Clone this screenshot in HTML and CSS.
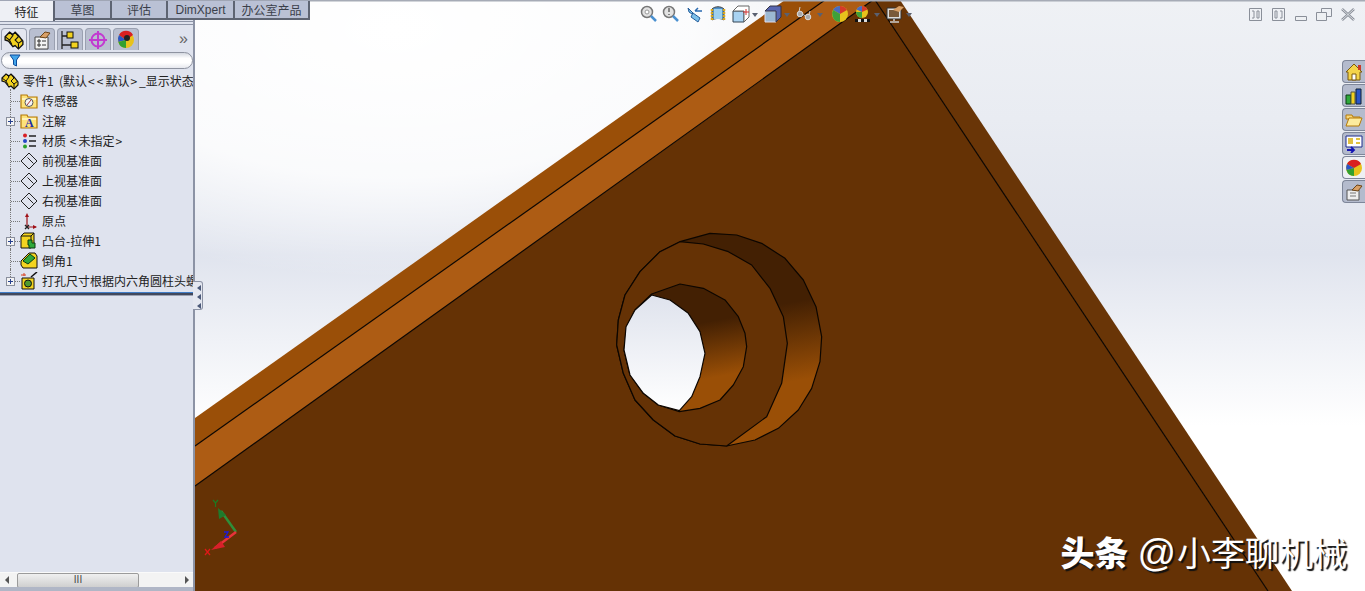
FILE: index.html
```html
<!DOCTYPE html>
<html lang="zh">
<head>
<meta charset="utf-8">
<title>SolidWorks</title>
<link rel="stylesheet" href="styles.css">
</head>
<body>
<svg class="defs" width="0" height="0" aria-hidden="true">
  <defs>
    <symbol id="i-part" viewBox="0 0 18 18"><path d="M1 6 5 2l3 2 2-2 3 3 4 5v3l-4 4-3-3-2 1-4-5-3-1z" fill="#f2d21f" stroke="#111" stroke-width="1.200"/><path d="M1 6l4 3 2 4M5 2l3 3-3 4M10 2l3 4-3 3 3 3 4-3M13 12v5" fill="none" stroke="#111"/></symbol>
    <symbol id="i-folder" viewBox="0 0 18 18"><path d="M1 3h6l1 2h9v11H1z" fill="#fde27a" stroke="#b57a08" stroke-width="1.200"/><path d="M2 6h14v2H2z" fill="#fff3b8"/></symbol>
    <symbol id="i-plane" viewBox="0 0 18 18"><path d="M9 1 17 9 9 17 1 9z M7.500 5.500l6 6" fill="none" stroke="#222"/></symbol>
  </defs>
</svg>
<div class="app">
  <aside class="panel">
    <nav class="top-tabs">
      <span class="top-tab active w-feature">特征</span>
      <span class="top-tab w-sketch">草图</span>
      <span class="top-tab w-eval">评估</span>
      <span class="top-tab w-dim">DimXpert</span>
      <span class="top-tab w-office">办公室产品</span>
    </nav>
    <div class="head-rule"></div>
    <div class="icon-tabs">
      <span class="icon-tab active"><svg width="20" height="20"><use href="#i-part"/></svg></span>
      <span class="icon-tab"><svg width="20" height="20" viewBox="0 0 20 20"><path d="M3 7h13v12H3z" fill="#f3f3f3" stroke="#444"/><path d="M6 10h2v2H6zM6 14h2v2H6zM10 11h4M10 15h4" fill="none" stroke="#333"/><path d="M8 7l5-5 5 1-4 5z" fill="#d9a066" stroke="#6d4518"/></svg></span>
      <span class="icon-tab"><svg width="20" height="20" viewBox="0 0 20 20"><path d="M2 1v18M2 6h6M2 15h9" fill="none" stroke="#222" stroke-width="1.300"/><rect x="7" y="2" width="6" height="6" fill="#f2d21f" stroke="#111"/><rect x="11" y="12" width="7" height="6" fill="#f2d21f" stroke="#111"/></svg></span>
      <span class="icon-tab"><svg width="20" height="20" viewBox="0 0 20 20"><circle cx="10" cy="10" r="6.500" fill="none" stroke="#c23ad0" stroke-width="2"/><path d="M10 1v18M1 10h18" stroke="#c23ad0" stroke-width="2"/></svg></span>
      <span class="icon-tab"><svg width="20" height="20" viewBox="0 0 20 20"><circle cx="10" cy="10" r="8" fill="#e8c21c"/><path d="M10 10 3 5a8 8 0 0 1 14 0z" fill="#d92020"/><path d="M10 10 2.400 12A8 8 0 0 1 3 5z" fill="#2a55c8"/><path d="M10 10 2.400 12A8 8 0 0 0 10 18z" fill="#31a02f"/><circle cx="11" cy="8" r="3" fill="#222"/></svg></span>
      <span class="more">»</span>
    </div>
    <div class="filter">
      <svg width="12" height="13" viewBox="0 0 12 13"><path d="M1 1h10L7.500 6v6l-3-1.500V6z" fill="#42a5ea" stroke="#0d4d9c"/></svg>
    </div>
    <ul class="tree">
      <li class="row root"><svg class="node" width="18" height="18"><use href="#i-part"/></svg><span>零件1&nbsp; (默认<i class="wide">&lt;&lt;</i>默认<i class="wide">&gt;</i>_显示状态 1&gt;)</span></li>
      <li class="row"><span class="branch"></span><svg class="node" width="18" height="18" viewBox="0 0 18 18"><use href="#i-folder"/><circle cx="9" cy="10.500" r="4" fill="#f5f5f5" stroke="#555"/><path d="M7 13l4-5" stroke="#a33"/></svg><span>传感器</span></li>
      <li class="row"><span class="branch"><i class="plus"></i></span><svg class="node" width="18" height="18" viewBox="0 0 18 18"><use href="#i-folder"/><text class="glyph-a" x="5" y="15">A</text></svg><span>注解</span></li>
      <li class="row"><span class="branch"></span><svg class="node" width="18" height="18" viewBox="0 0 18 18"><circle cx="5" cy="3.500" r="2" fill="#d81f26"/><circle cx="5" cy="9" r="2" fill="#2546c7"/><circle cx="5" cy="14.500" r="2" fill="#2aa02b"/><path d="M9 4h7M9 9h7M9 14h7" stroke="#222" stroke-width="1.500"/></svg><span>材质 <i class="wide">&lt;</i>未指定<i class="wide">&gt;</i></span></li>
      <li class="row"><span class="branch"></span><svg class="node" width="18" height="18"><use href="#i-plane"/></svg><span>前视基准面</span></li>
      <li class="row"><span class="branch"></span><svg class="node" width="18" height="18"><use href="#i-plane"/></svg><span>上视基准面</span></li>
      <li class="row"><span class="branch"></span><svg class="node" width="18" height="18"><use href="#i-plane"/></svg><span>右视基准面</span></li>
      <li class="row"><span class="branch"></span><svg class="node" width="18" height="18" viewBox="0 0 18 18"><path d="M7 15V3M7 15h9" stroke="#a01218" stroke-width="1.200"/><path d="M7 1 5 5h4zM17 15l-4-2v4z" fill="#a01218"/><path d="M5 13l4 4M9 13l-4 4" stroke="#222" stroke-width="1.300"/></svg><span>原点</span></li>
      <li class="row"><span class="branch"><i class="plus"></i></span><svg class="node" width="18" height="18" viewBox="0 0 18 18"><path d="M1 4l3-3h10v12l-3 3H1z" fill="#f4d420" stroke="#111"/><path d="M1 4h10v12M11 4l3-3" fill="none" stroke="#111"/><path d="M8 8h4v3h3v5H9v-3H8z" fill="#2fa83a" stroke="#0a3d12"/></svg><span>凸台-拉伸1</span></li>
      <li class="row"><span class="branch"></span><svg class="node" width="18" height="18" viewBox="0 0 18 18"><path d="M1 9 9 1h6l2 3v12H3L1 13z" fill="#f4d420" stroke="#111"/><path d="M3 9 10 2l5 4-7 6z" fill="#2fa83a" stroke="#0a3d12"/></svg><span>倒角1</span></li>
      <li class="row"><span class="branch"><i class="plus"></i></span><svg class="node" width="18" height="18" viewBox="0 0 18 18"><path d="M2 6h12v11H2z" fill="#f4d420" stroke="#111"/><circle cx="8" cy="11.500" r="3.500" fill="#4f9a2f" stroke="#111"/><path d="M11 5l6-5" stroke="#111" stroke-width="1.500"/><path d="M4 1v3M1 3h5" stroke="#d8401f"/></svg><span>打孔尺寸根据内六角圆柱头螺钉的类型1</span></li>
    </ul>
    <div class="pane-rule"></div>
    <div class="pane-fill"></div>
    <div class="hscroll">
      <span class="arrow-left"></span>
      <span class="thumb">III</span>
      <span class="arrow-right"></span>
    </div>
    <div class="panel-foot"></div>
    <div class="splitter"><i></i><i></i><i></i></div>
  </aside>

  <main class="viewport">
    <svg class="scene" viewBox="195 0 1170 591" preserveAspectRatio="none">
      <defs>
        <linearGradient id="bg" x1="0" y1="0" x2="0" y2="1">
          <stop offset="0" stop-color="#eff1f5"/>
          <stop offset=".2" stop-color="#e9ecf2"/>
          <stop offset=".43" stop-color="#e0e4ee"/>
          <stop offset=".72" stop-color="#ffffff"/>
          <stop offset="1" stop-color="#ffffff"/>
        </linearGradient>
        <radialGradient id="glow" cx=".17" cy=".05" r=".42">
          <stop offset="0" stop-color="#fff"/>
          <stop offset=".6" stop-color="#fff" stop-opacity=".8"/>
          <stop offset="1" stop-color="#fff" stop-opacity="0"/>
        </radialGradient>
        <linearGradient id="wall1" gradientUnits="userSpaceOnUse" x1="550" y1="200" x2="610" y2="530">
          <stop offset="0" stop-color="#432003"/>
          <stop offset=".15" stop-color="#432003"/>
          <stop offset=".85" stop-color="#9a4f06"/>
          <stop offset="1" stop-color="#9a4f06"/>
        </linearGradient>
        <linearGradient id="wall2" gradientUnits="userSpaceOnUse" x1="330" y1="270" x2="370" y2="490">
          <stop offset="0" stop-color="#432003"/>
          <stop offset=".15" stop-color="#432003"/>
          <stop offset=".9" stop-color="#9a4f06"/>
          <stop offset="1" stop-color="#9a4f06"/>
        </linearGradient>
        <linearGradient id="through" gradientUnits="userSpaceOnUse" x1="0" y1="225" x2="0" y2="572">
          <stop offset="0" stop-color="#dfe3ed"/>
          <stop offset="1" stop-color="#ffffff"/>
        </linearGradient>
      </defs>
      <rect x="195" y="0" width="1170" height="591" fill="url(#bg)"/>
      <rect x="195" y="0" width="1170" height="591" fill="url(#glow)"/>
      <polygon points="195,418 785,0 825,0 195,446" fill="#9a4f08"/>
      <polygon points="195,446 825,0 873,0 195,486" fill="#ad5c14"/>
      <polygon points="195,486 873,0 875,0 1268,591 195,591" fill="#653205"/>
      <polygon points="875,0 900,0 1292,591 1268,591" fill="#693507"/>
      <path d="M195 446 825 0M195 486 873 0M875 0 1268 591" fill="none" stroke="#0d0600" stroke-width="1.200"/>
      <g transform="translate(600 220) scale(.33333)">
        <g stroke="#0d0600" stroke-width="1.200" stroke-linejoin="round">
          <polygon vector-effect="non-scaling-stroke" fill="url(#wall1)" points="240,65 330,40 410,45 485,70 555,115 610,180 648,260 665,350 660,425 635,505 595,570 535,625 465,660 380,678 300,672 225,648 160,600 105,540 70,460 50,375 55,300 75,225 120,155 180,95"/>
          <polygon vector-effect="non-scaling-stroke" fill="#653205" points="240,65 310,72 385,95 455,135 510,205 550,290 562,370 545,490 500,590 380,678 300,672 225,648 160,600 105,540 70,460 50,375 55,300 75,225 120,155 180,95"/>
          <polygon vector-effect="non-scaling-stroke" fill="url(#wall2)" points="155,222 240,192 310,205 375,240 415,290 435,340 440,380 430,440 400,495 360,540 300,565 238,575 175,555 130,520 90,465 72,390 80,320 105,270"/>
          <polygon vector-effect="non-scaling-stroke" fill="url(#through)" points="155,225 210,240 265,280 300,335 315,400 300,470 275,530 238,572 175,555 130,520 90,465 72,390 78,320 105,270"/>
        </g>
      </g>
      <g class="triad">
        <path d="M236 532 221 511" stroke="#2f8f3a" stroke-width="2.500"/>
        <path d="M218 508 226 515 219 519z" fill="#1f7a2c"/>
        <path d="M236 532 215 548" stroke="#e8323a" stroke-width="2.500"/>
        <path d="M211 550 221 541 225 547z" fill="#d8202a"/>
        <path d="M224 532h4l-3 5h4" fill="none" stroke="#1a1ae0" stroke-width="1.300"/>
        <path d="M213 500l2.500 3 2.500-3M215.500 503v4" fill="none" stroke="#1c7a22" stroke-width="1.200"/>
        <path d="M205 549l5 6M210 549l-5 6" fill="none" stroke="#e01818" stroke-width="1.200"/>
      </g>
      <rect x="195" y="0" width="1170" height="1.500" fill="#a6abb6"/>
    </svg>

    <div class="view-tools">
      <svg class="tool t-a" width="18" height="18" viewBox="0 0 18 18"><circle cx="7" cy="7" r="5.500" fill="#e2e2e2" stroke="#777" stroke-width="1.500"/><circle cx="7" cy="7" r="2" fill="#fff" stroke="#999"/><path d="M11 11l5 5" stroke="#4a90d0" stroke-width="2.500"/></svg>
      <svg class="tool t-b" width="18" height="18" viewBox="0 0 18 18"><circle cx="7" cy="7" r="5.500" fill="#e2e2e2" stroke="#777" stroke-width="1.500"/><path d="M7 3v4M7 9v1" stroke="#666" stroke-width="1.500"/><path d="M11 11l5 5" stroke="#4a90d0" stroke-width="2.500"/></svg>
      <svg class="tool t-c" width="18" height="18" viewBox="0 0 18 18"><path d="M2 3l5 5-1 1-3-2zM7 8l7 5-2 4-7-5z" fill="#7cc0ea" stroke="#245c9a"/><path d="M9 6h7M9 6l3-3" fill="none" stroke="#2a6ab0" stroke-width="1.500"/></svg>
      <svg class="tool t-d" width="18" height="18" viewBox="0 0 18 18"><path d="M3 4c3-3 9-3 12 0v11c-3-2-9-2-12 0z" fill="#4d8fc7" stroke="#444"/><path d="M5 4h8v10H5z" fill="#9ed0ef"/><path d="M3 4v11M15 4v11" stroke="#d9a71c" stroke-width="2.500" stroke-dasharray="2 1"/></svg>
      <svg class="tool t-e" width="18" height="18" viewBox="0 0 18 18"><path d="M1 6h11v11H1z" fill="#a9d3f2" stroke="#345"/><path d="M1 6l5-5h11v11l-5 5V6z" fill="#fff" stroke="#666"/><path d="M14 4v6M11 7h6" stroke="#d03030"/></svg>
      <i class="caret c-e"></i>
      <svg class="tool t-f" width="18" height="18" viewBox="0 0 18 18"><path d="M1 6h11v11H1z" fill="#9cb8d2" stroke="#dde"/><path d="M1 6l5-5h11v11l-5 5V6z" fill="#5866b0" stroke="#334"/></svg>
      <i class="caret c-f"></i>
      <svg class="tool t-g" width="18" height="18" viewBox="0 0 18 18"><circle cx="5" cy="9" r="2.800" fill="#a8a8a8" stroke="#ddd"/><circle cx="13" cy="12" r="2.800" fill="#a8a8a8" stroke="#ddd"/><path d="M7 9l4 2M4 7l1-5M14 10l1-4" fill="none" stroke="#ccc"/></svg>
      <i class="caret c-g"></i>
      <svg class="tool t-h" width="18" height="18" viewBox="0 0 18 18"><circle cx="9" cy="9" r="8" fill="#e8c21c"/><path d="M9 9 2 5a8 8 0 0 1 7-4z" fill="#4a6cc0"/><path d="M9 9V1a8 8 0 0 1 7 4z" fill="#d63a2a"/><path d="M9 9 1.500 11A8 8 0 0 1 2 5zM9 9v8a8 8 0 0 1-7.500-6z" fill="#3ea03a"/></svg>
      <svg class="tool t-i" width="18" height="18" viewBox="0 0 18 18"><circle cx="9" cy="7" r="6" fill="#e8c21c"/><path d="M9 7 3.500 4.500A6 6 0 0 1 9 1z" fill="#4a6cc0"/><path d="M9 7V1a6 6 0 0 1 5.500 3.500z" fill="#d63a2a"/><path d="M9 7v6a6 6 0 0 1-6-6z" fill="#3ea03a"/><path d="M2 14h3v3H2zM8 14h3v3H8zM14 14h3v3h-3z" fill="#111"/><path d="M5 14h3v3H5zM11 14h3v3h-3z" fill="#ddd"/></svg>
      <i class="caret c-i"></i>
      <svg class="tool t-j" width="18" height="18" viewBox="0 0 18 18"><path d="M1 3h14v11H1z" fill="#ddd" stroke="#333"/><path d="M3 5h10v7H3z" fill="#7a5a3a"/><path d="M8 14v2M4 17h9" stroke="#ccc" stroke-width="1.500"/><path d="M7 5l6-4 5 1-5 5z" fill="#d9a066"/></svg>
      <i class="caret c-j"></i>
    </div>

    <div class="win-tools">
      <svg class="win w-a" width="13" height="13" viewBox="0 0 13 13"><path d="M.500.500h12v12H.500z" fill="none" stroke="#8a8f99"/><path d="M3 3h2v7H3M8 3h2v7H8z" fill="none" stroke="#8a8f99"/></svg>
      <svg class="win w-b" width="13" height="13" viewBox="0 0 13 13"><path d="M.500.500h12v12H.500z" fill="none" stroke="#8a8f99"/><path d="M3 3h2v7H3zM8 3h2v7H8" fill="none" stroke="#8a8f99"/></svg>
      <svg class="win w-c" width="12" height="13" viewBox="0 0 12 13"><path d="M.500 8.500h11v4H.500z" fill="#eef0f3" stroke="#8a8f99"/></svg>
      <svg class="win w-d" width="16" height="13" viewBox="0 0 16 13"><path d="M5.500.500h10v8h-10z" fill="none" stroke="#8a8f99"/><path d="M.500 4.500h10v8H.500z" fill="#eef0f3" stroke="#8a8f99"/></svg>
      <svg class="win w-e" width="14" height="13" viewBox="0 0 14 13"><path d="M1 1l12 11M13 1 1 12" stroke="#8a8f99" stroke-width="2.500"/><path d="M1 1l12 11M13 1 1 12" stroke="#eef0f3" stroke-width=".8"/></svg>
    </div>

    <div class="task-tabs">
      <span class="task"><svg width="18" height="18" viewBox="0 0 18 18"><path d="M1 9 9 1l8 8h-2v8H3V9z" fill="#f4d44a" stroke="#7a5a10"/><path d="M7 11h4v6H7z" fill="#fff" stroke="#7a5a10"/><path d="M13 2h3v5h-3z" fill="#c83a2a"/></svg></span>
      <span class="task"><svg width="18" height="18" viewBox="0 0 18 18"><path d="M1 8h5v9H1z" fill="#2fa83a" stroke="#0a3d12"/><path d="M6 5h4v12H6z" fill="#f2d21f" stroke="#554"/><path d="M11 2h5v15h-5z" fill="#2a55c8" stroke="#123"/></svg></span>
      <span class="task"><svg width="18" height="18" viewBox="0 0 18 18"><path d="M1 4h6l1 2h7v2H1z" fill="#f7d77a" stroke="#b57a08"/><path d="M1 15l3-8h13l-3 8z" fill="#fdeb9e" stroke="#b57a08"/></svg></span>
      <span class="task"><svg width="18" height="18" viewBox="0 0 18 18"><path d="M1 1h16v11H1z" fill="#fff" stroke="#1c2a8c"/><path d="M3 3h5v6H3zM11 3h4v2h-4zM11 7h4v2h-4z" fill="#e0c040"/><path d="M2 15h6M6 12l3 3-3 3" fill="none" stroke="#1414b4" stroke-width="1.800"/></svg></span>
      <span class="task active"><svg width="18" height="18" viewBox="0 0 18 18"><circle cx="9" cy="9" r="8" fill="#e8c21c"/><path d="M9 9 2 5a8 8 0 0 1 14 0z" fill="#d92020"/><path d="M9 9 1.500 11A8 8 0 0 0 9 17z" fill="#31a02f"/><path d="M9 9 2 5A8 8 0 0 0 1.500 11z" fill="#2a55c8"/></svg></span>
      <span class="task"><svg width="18" height="18" viewBox="0 0 18 18"><path d="M2 7h12v10H2z" fill="#eee" stroke="#555"/><path d="M5 10h6M5 13h6" stroke="#777"/><path d="M7 7l5-5 5 1-4 5z" fill="#d9a066" stroke="#6d4518"/></svg></span>
    </div>

    <div class="watermark"><b>头条</b><span class="at">@</span>小李聊机械</div>
  </main>
</div>
</body>
</html>
```

FILE: styles.css
```css
* { box-sizing: border-box; }
html, body { margin: 0; height: 100%; overflow: hidden; }
body { font-family: "Noto Sans CJK SC", "Liberation Sans", sans-serif; font-size: 12px; color: #222; background: #fff; }
.defs { position: absolute; }
.app { display: flex; width: 1365px; height: 591px; }

/* left panel */
.panel { position: relative; z-index: 3; width: 195px; flex: none; display: flex; flex-direction: column; background: #dfe3ee; border-right: 2px solid #8c93a5; }
.top-tabs { display: flex; width: 310px; height: 20px; flex: none; background: #b9c0d4; border-top: 1px solid #a0a6b5; }
.top-tab { display: flex; align-items: center; justify-content: center; height: 19px; background: #bac1d5; color: #3a3f4a; border-right: 2px solid #5e6472; border-bottom: 2px solid #5e6472; font-family: "Liberation Sans", "Noto Sans CJK SC", sans-serif; font-size: 12px; }
.top-tab.active { height: 21px; background: #eef0f5; color: #222; border-bottom: 1px solid #6a707e; }
.w-feature { width: 55px; } .w-sketch { width: 57px; } .w-eval { width: 56px; } .w-dim { width: 67px; } .w-office { width: 75px; }
.head-rule { height: 4px; margin-top: 1px; border-top: 1px solid #8c93a5; border-bottom: 1px solid #8c93a5; flex: none; }
.icon-tabs { display: flex; align-items: flex-end; gap: 2px; height: 25px; padding-left: 1px; flex: none; }
.icon-tab { display: flex; align-items: center; justify-content: center; width: 26px; height: 22px; background: #b9bfd0; border: 1px solid #9aa0b0; border-bottom: 0; border-radius: 4px 4px 0 0; }
.icon-tab.active { background: #e4e7f0; }
.more { margin-left: 38px; font: 16px/22px "Liberation Sans", sans-serif; color: #666; }
.filter { display: flex; align-items: center; height: 17px; margin: 2px 0 0 1px; padding-left: 7px; flex: none; border: 1px solid #8e93a0; border-radius: 9px; background: linear-gradient(#d4d8e0, #fff 35%, #fff 65%, #e6e8ee); }
.tree { list-style: none; margin: 2px 0 0; padding: 0; height: 221px; flex: none; overflow: hidden; }
.row { display: flex; align-items: center; height: 20px; white-space: nowrap; font-size: 12px; line-height: 20px; }
.root { padding-left: 1px; }
.wide { font-style: normal; letter-spacing: 2px; padding-left: 1px; }
.branch { position: relative; flex: none; width: 20px; height: 20px; }
.branch::before { content: ""; position: absolute; left: 10px; top: -2px; height: 22px; border-left: 1px dotted #777; }
.branch::after { content: ""; position: absolute; left: 11px; top: 10px; width: 9px; border-top: 1px dotted #777; }
.row:last-child .branch::before { height: 12px; }
.plus { position: absolute; z-index: 1; left: 6px; top: 6px; width: 9px; height: 9px; background: linear-gradient(#26408e, #26408e) center / 5px 1px no-repeat, linear-gradient(#26408e, #26408e) center / 1px 5px no-repeat, #f4f4f4; border: 1px solid #8a8f9c; }
.node { flex: none; margin-right: 4px; }
.row > span:last-child { overflow: hidden; }
.glyph-a { font: bold 12px "Liberation Serif", serif; fill: #1c2fa8; }
.pane-rule { height: 4px; flex: none; background: linear-gradient(#3f7cc6 25%, #41485c 25%, #41485c 75%, #9aa0b0 75%); }
.pane-fill { flex: 1; }
.hscroll { display: flex; align-items: center; height: 15px; flex: none; background: #f3f3f3; border-top: 1px solid #fafafa; }
.arrow-left { width: 0; height: 0; margin-left: 5px; border: 4px solid transparent; border-right: 4px solid #555; border-left: 0; }
.arrow-right { width: 0; height: 0; margin-left: auto; margin-right: 4px; border: 4px solid transparent; border-left: 4px solid #555; border-right: 0; }
.thumb { display: flex; align-items: center; justify-content: center; width: 122px; height: 15px; margin-left: 8px; background: linear-gradient(#f0f0f0, #cfcfcf); border: 1px solid #9b9b9b; border-radius: 2px; font: 10px/1 "Liberation Sans", sans-serif; color: #444; }
.panel-foot { height: 4px; flex: none; background: #b0b6c6; }
.splitter { position: absolute; left: 193px; top: 281px; display: flex; flex-direction: column; align-items: flex-end; gap: 3px; width: 10px; height: 29px; padding: 3px 1px 0 0; background: #e4e7f0; border: 1px solid #8c93a5; border-left: 0; border-radius: 0 3px 3px 0; }
.splitter i { width: 0; height: 0; border: 3.500px solid transparent; border-right: 4px solid #4a5878; border-left: 0; }

/* graphics viewport */
.viewport { position: relative; flex: 1; min-width: 0; overflow: hidden; }
.scene { display: block; width: 100%; height: 100%; }
.view-tools, .win-tools, .task-tabs, .watermark { position: absolute; }
.view-tools { left: 0; top: 0; width: 740px; height: 28px; }
.tool { position: absolute; top: 5px; }
.t-a { left: 445px; } .t-b { left: 467px; } .t-c { left: 491px; } .t-d { left: 514px; } .t-e { left: 537px; }
.t-f { left: 569px; } .t-g { left: 600px; } .t-h { left: 636px; } .t-i { left: 658px; } .t-j { left: 691px; }
.caret { position: absolute; top: 13px; width: 0; height: 0; border: 3.500px solid transparent; border-top: 4px solid #5a6070; border-bottom: 0; }
.c-e { left: 557px; } .c-f { left: 589px; } .c-g { left: 622px; } .c-i { left: 679px; } .c-j { left: 711px; }
.win-tools { left: 0; top: 0; width: 1170px; height: 24px; }
.win { position: absolute; top: 8px; }
.w-a { left: 1054px; } .w-b { left: 1077px; } .w-c { left: 1100px; } .w-d { left: 1121px; } .w-e { left: 1146px; }
.task-tabs { right: 0; top: 60px; display: flex; flex-direction: column; gap: 1px; }
.task { display: flex; align-items: center; justify-content: center; width: 23px; height: 23px; background: #b4bbcd; border: 1px solid #7e8699; border-right: 0; border-radius: 4px 0 0 4px; }
.task.active { background: #eef0f4; }
.watermark { right: 18px; bottom: 16px; font-family: "Noto Sans CJK SC", sans-serif; font-size: 34px; line-height: 44px; white-space: nowrap; color: #fff; text-shadow: 2px 2px 1px #111; }
.watermark b { font-weight: 900; }
.at { margin: 0 1px 0 9px; font-family: "Liberation Sans", sans-serif; font-size: 38px; }
```
